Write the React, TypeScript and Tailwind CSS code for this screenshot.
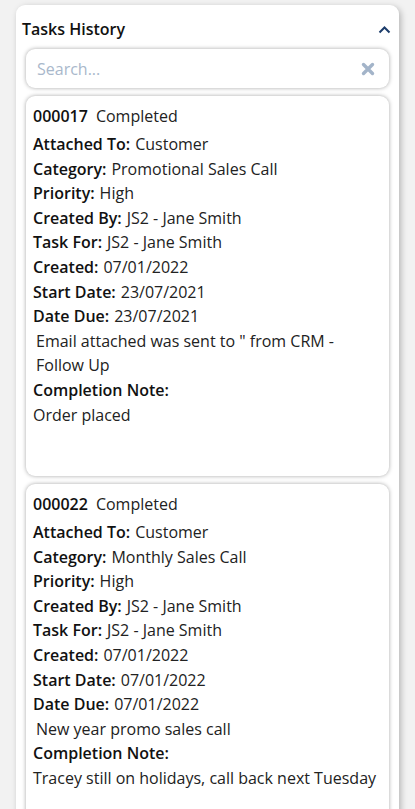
import React from "react";

type Row = { label: string; value: string };
type Task = {
  id: string;
  status: string;
  rows: Row[];
  desc: string[];
  note: string;
};

const tasks: Task[] = [
  {
    id: "000017",
    status: "Completed",
    rows: [
      { label: "Attached To:", value: "Customer" },
      { label: "Category:", value: "Promotional Sales Call" },
      { label: "Priority:", value: "High" },
      { label: "Created By:", value: "JS2 - Jane Smith" },
      { label: "Task For:", value: "JS2 - Jane Smith" },
      { label: "Created:", value: "07/01/2022" },
      { label: "Start Date:", value: "23/07/2021" },
      { label: "Date Due:", value: "23/07/2021" },
    ],
    desc: ['Email attached was sent to " from CRM -', "Follow Up"],
    note: "Order placed",
  },
  {
    id: "000022",
    status: "Completed",
    rows: [
      { label: "Attached To:", value: "Customer" },
      { label: "Category:", value: "Monthly Sales Call" },
      { label: "Priority:", value: "High" },
      { label: "Created By:", value: "JS2 - Jane Smith" },
      { label: "Task For:", value: "JS2 - Jane Smith" },
      { label: "Created:", value: "07/01/2022" },
      { label: "Start Date:", value: "07/01/2022" },
      { label: "Date Due:", value: "07/01/2022" },
    ],
    desc: ["New year promo sales call"],
    note: "Tracey still on holidays, call back next Tuesday",
  },
];

function TaskCard({ t }: { t: Task }) {
  return (
    <div className="min-h-[380px] rounded-[9px] bg-white px-[7px] pt-[8px] pb-2 shadow-[0_0_4px_rgba(0,0,0,0.35)] text-[16px] leading-[24.6px] text-[#222]">
      <div className="flex items-center">
        <span className="font-semibold text-[#111]">{t.id}</span>
        <span className="ml-[8px]">{t.status}</span>
      </div>
      <div className="mt-[3.5px]">
        {t.rows.map((r) => (
          <div key={r.label} className="flex">
            <span className="font-semibold text-[#111]">{r.label}</span>
            <span className="ml-[5px]">{r.value}</span>
          </div>
        ))}
        {t.desc.map((d) => (
          <div key={d} className="pl-[3px]">
            {d}
          </div>
        ))}
        <div className="font-semibold text-[#111]">Completion Note:</div>
        <div>{t.note}</div>
      </div>
    </div>
  );
}

export default function App() {
  return (
    <div
      className="bg-[#f2f2f2] pt-[5px] px-4 overflow-hidden h-[809px]"
      style={{ fontFamily: '"Open Sans", "Noto Sans", sans-serif' }}
    >
      <div className="rounded-[9px] bg-white shadow-[2px_2px_6px_rgba(0,0,0,0.25)] pb-4 min-h-[900px]">
        <div className="flex items-center justify-between pl-[6px] pr-[8px] pt-[14px] pb-[10px]">
          <span className="text-[16px] font-semibold text-[#111] leading-[20px]">Tasks History</span>
          <svg width="13" height="9" viewBox="0 0 13 9" className="mt-[1px]">
            <path d="M1.5 7.5 L6.5 2.5 L11.5 7.5" fill="none" stroke="#1c3d6b" strokeWidth="2" />
          </svg>
        </div>
        <div className="px-[10px] flex flex-col gap-2">
          <div className="flex h-[39px] items-center justify-between rounded-[9px] bg-white pl-[11px] pr-[14px] shadow-[0_0_4px_rgba(0,0,0,0.35)]">
            <span className="text-[16px] text-[#a9b8cb]">Search...</span>
            <svg width="14" height="14" viewBox="0 0 14 14">
              <path d="M2.5 2.5 L11.5 11.5 M11.5 2.5 L2.5 11.5" stroke="#a3b4c9" strokeWidth="3.4" strokeLinecap="round" />
            </svg>
          </div>
          {tasks.map((t) => (
            <TaskCard key={t.id} t={t} />
          ))}
        </div>
      </div>
    </div>
  );
}
